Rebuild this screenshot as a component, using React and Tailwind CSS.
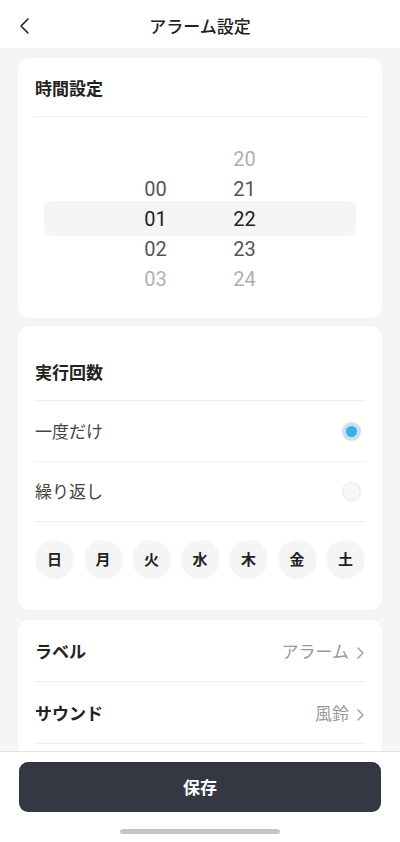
import React from 'react';

const hours = ['', '00', '01', '02', '03'];
const minutes = ['20', '21', '22', '23', '24'];
const days = ['日', '月', '火', '水', '木', '金', '土'];

const tone = (i) => {
    if (i === 2) return 'text-[#222222]';
    if (i === 1 || i === 3) return 'text-[#555555]';
    return 'text-[#b0b0b0]';
};

const Chevron = () => (
    <svg width="9" height="14" viewBox="0 0 9 14" fill="none" className="ml-[7px]">
        <path d="M2 2l5 5-5 5" stroke="#9a9a9a" strokeWidth="1.4" strokeLinecap="round" strokeLinejoin="round" />
    </svg>
);

const Radio = ({ checked }) =>
    checked ? (
        <div className="w-[19px] h-[19px] rounded-full bg-[#c3e4f7] flex items-center justify-center">
            <div className="w-[11px] h-[11px] rounded-full bg-[#47a9e2]" />
        </div>
    ) : (
        <div className="w-[19px] h-[19px] rounded-full bg-[#f7f7f8] border border-[#e6e6e8]" />
    );

const App = () => {
    return (
        <div
            className="w-[400px] h-[842px] flex flex-col bg-white overflow-hidden"
            style={{ fontFamily: 'Roboto, "Noto Sans CJK JP", sans-serif' }}
        >
            {/* Header */}
            <div className="h-[48px] shrink-0 flex items-center bg-white pt-[4px]">
                <div className="pl-[18px] w-[60px]">
                    <svg width="14" height="18" viewBox="0 0 14 18" fill="none">
                        <path d="M10 2L3 9l7 7" stroke="#222" strokeWidth="1.6" strokeLinecap="round" strokeLinejoin="round" />
                    </svg>
                </div>
                <h1 className="flex-1 text-center text-[17px] font-medium text-[#222] pr-[60px] pt-[3px]">アラーム設定</h1>
            </div>

            {/* Content */}
            <div className="flex-1 overflow-hidden bg-[#f5f5f5] px-[18px] pt-[10px] flex flex-col">
                {/* Time setting */}
                <div className="bg-white rounded-xl px-[17px] pb-[24px] shrink-0">
                    <div className="pt-[19px] pb-[15px] border-b border-[#eeeeee]">
                        <h2 className="text-[17px] leading-[24px] font-bold text-[#222]">時間設定</h2>
                    </div>
                    <div className="relative mt-[27px]">
                        <div className="absolute left-[9px] right-[9px] top-[57px] h-[35px] rounded-lg bg-[#f5f5f5]" />
                        <div className="relative flex justify-center gap-[29px] text-[20px]">
                            <div className="w-[60px] flex flex-col items-center">
                                {hours.map((h, i) => (
                                    <div key={i} className={`h-[30px] leading-[30px] ${tone(i)}`}>{h}</div>
                                ))}
                            </div>
                            <div className="w-[60px] flex flex-col items-center">
                                {minutes.map((m, i) => (
                                    <div key={i} className={`h-[30px] leading-[30px] ${tone(i)}`}>{m}</div>
                                ))}
                            </div>
                        </div>
                    </div>
                </div>

                {/* Repeat */}
                <div className="bg-white rounded-xl px-[17px] pb-[31px] mt-[8px] shrink-0">
                    <div className="pt-[35px] pb-[15px] border-b border-[#eeeeee]">
                        <h2 className="text-[17px] leading-[24px] font-bold text-[#222]">実行回数</h2>
                    </div>
                    <div className="h-[61px] flex items-center justify-between border-b border-[#eeeeee]">
                        <span className="text-[17px] text-[#444] pt-[3px]">一度だけ</span>
                        <div className="pr-[4px]"><Radio checked /></div>
                    </div>
                    <div className="h-[60px] flex items-center justify-between border-b border-[#eeeeee]">
                        <span className="text-[17px] text-[#444] pt-[3px]">繰り返し</span>
                        <div className="pr-[4px]"><Radio /></div>
                    </div>
                    <div className="mt-[18px] flex justify-between">
                        {days.map((d) => (
                            <div key={d} className="w-[39px] h-[39px] rounded-full bg-[#f5f5f5] flex items-center justify-center text-[15px] font-bold text-[#222] pt-[1px]">
                                {d}
                            </div>
                        ))}
                    </div>
                </div>

                {/* Label / Sound */}
                <div className="bg-white rounded-xl px-[17px] pb-[40px] mt-[10px] shrink-0">
                    <div className="h-[62px] flex items-center justify-between border-b border-[#eeeeee] pt-[4px]">
                        <span className="text-[17px] font-bold text-[#222]">ラベル</span>
                        <div className="flex items-center">
                            <span className="text-[17px] text-[#9a9a9a]">アラーム</span>
                            <Chevron />
                        </div>
                    </div>
                    <div className="h-[62px] flex items-center justify-between border-b border-[#eeeeee] pt-[4px]">
                        <span className="text-[17px] font-bold text-[#222]">サウンド</span>
                        <div className="flex items-center">
                            <span className="text-[17px] text-[#9a9a9a]">風鈴</span>
                            <Chevron />
                        </div>
                    </div>
                </div>
            </div>

            {/* Bottom bar */}
            <div className="h-[91px] shrink-0 bg-white border-t border-[#e3e3e3] px-[19px] pt-[10px] flex flex-col items-center">
                <button className="w-full h-[50px] rounded-[9px] bg-[#343842] text-white text-[17px] font-bold pt-[4px]">
                    保存
                </button>
                <div className="mt-[17px] w-[160px] h-[5px] rounded-full bg-[#c6c6c6]" />
            </div>
        </div>
    );
};

export default App;
